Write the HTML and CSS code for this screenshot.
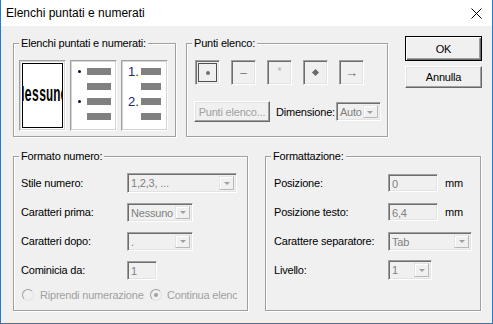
FILE: index.html
```html
<!DOCTYPE html>
<html>
<head>
<meta charset="utf-8">
<title>Elenchi puntati e numerati</title>
<link rel="stylesheet" href="styles.css">
</head>
<body>
<div class="window">
  <div class="titlebar">
    <span class="title">Elenchi puntati e numerati</span>
    <svg class="close" width="11" height="11" viewBox="0 0 11 11"><path d="M0.5 0.5L10.5 10.5M10.5 0.5L0.5 10.5" stroke="#000" stroke-width="1" fill="none"/></svg>
  </div>
  <div class="body">
    <div class="row row-top">
      <fieldset class="group g1">
        <legend>Elenchi puntati e numerati:</legend>
        <div class="previews">
          <div class="pv"><div class="none"><span>Nessuno</span></div></div>
          <div class="pv pv-bullets">
            <span class="dot"></span><span class="bar"></span>
            <span></span><span class="bar"></span>
            <span class="dot"></span><span class="bar"></span>
            <span></span><span class="bar"></span>
          </div>
          <div class="pv pv-numbers">
            <span class="num">1.</span><span class="bar"></span>
            <span></span><span class="bar"></span>
            <span class="num">2.</span><span class="bar"></span>
            <span></span><span class="bar"></span>
          </div>
        </div>
      </fieldset>
      <fieldset class="group g2">
        <legend>Punti elenco:</legend>
        <div class="bulletbtns">
          <div class="bb sel"><span class="g-dot"></span></div>
          <div class="bb"><span class="g-dash">–</span></div>
          <div class="bb"><span class="g-star">*</span></div>
          <div class="bb"><span class="g-diam"></span></div>
          <div class="bb"><span class="g-arrow">→</span></div>
        </div>
        <div class="g2row">
          <div class="btn btn-dis">Punti elenco...</div>
          <span class="lbl-dim">Dimensione:</span>
          <div class="combo w-auto"><span class="val">Auto</span><span class="dd"><i></i></span></div>
        </div>
      </fieldset>
      <div class="actions">
        <div class="btn btn-default">OK</div>
        <div class="btn btn-cancel">Annulla</div>
      </div>
    </div>
    <div class="row row-bottom">
      <fieldset class="group g3">
        <legend>Formato numero:</legend>
        <div class="form f3">
          <span class="lbl">Stile numero:</span>
          <div class="combo w-stile"><span class="val">1,2,3, ...</span><span class="dd"><i></i></span></div>
          <span class="lbl">Caratteri prima:</span>
          <div class="combo w-car"><span class="val">Nessuno</span><span class="dd"><i></i></span></div>
          <span class="lbl">Caratteri dopo:</span>
          <div class="combo w-car"><span class="val">.</span><span class="dd"><i></i></span></div>
          <span class="lbl">Cominicia da:</span>
          <div class="input w-start">1</div>
        </div>
        <div class="radios">
          <label class="radio-item r1"><span class="radio"></span><span class="rtext">Riprendi numerazione</span></label>
          <label class="radio-item r2"><span class="radio checked"></span><span class="rtext">Continua elenco</span></label>
        </div>
      </fieldset>
      <fieldset class="group g4">
        <legend>Formattazione:</legend>
        <div class="form f4">
          <span class="lbl">Posizione:</span>
          <div class="input w-pos">0</div>
          <span class="unit">mm</span>
          <span class="lbl">Posizione testo:</span>
          <div class="input w-pos">6,4</div>
          <span class="unit">mm</span>
          <span class="lbl">Carattere separatore:</span>
          <div class="combo w-sep span2"><span class="val">Tab</span><span class="dd"><i></i></span></div>
          <span class="lbl">Livello:</span>
          <div class="combo w-liv span2"><span class="val">1</span><span class="dd"><i></i></span></div>
        </div>
      </fieldset>
    </div>
  </div>
</div>
</body>
</html>
```

FILE: styles.css
```css
html, body {
  margin: 0;
  padding: 0;
  background: #f0f0f0;
}
body {
  font-family: "Liberation Sans", Arial, sans-serif;
  font-size: 11px;
  letter-spacing: -0.2px;
  color: #000;
}
.window {
  width: 493px;
  height: 324px;
  box-sizing: border-box;
  border: 1px solid #1a7fd4;
  border-top: 0;
  background: #f0f0f0;
  display: flex;
  flex-direction: column;
  overflow: hidden;
}
.titlebar {
  height: 26px;
  flex: none;
  background: #fff;
  display: flex;
  align-items: flex-start;
  justify-content: space-between;
  padding: 0 10px 0 5px;
}
.title {
  font-size: 12px;
  letter-spacing: 0;
  line-height: 16px;
  margin-top: 5px;
}
.close {
  margin-top: 8px;
}
.body {
  padding: 11px 0 0 12px;
  display: flex;
  flex-direction: column;
  gap: 13px;
}
.row {
  display: flex;
  align-items: flex-start;
}
.group {
  margin: 0;
  padding: 10px 0 0 0;
  min-width: 0;
  box-sizing: border-box;
  border: 1px solid #a0a0a0;
  box-shadow: 1px 1px 0 #fff, inset 1px 1px 0 #fff;
}
.group > legend {
  margin-left: 5px;
  padding: 0 2px;
  line-height: 13px;
  background: #f0f0f0;
}
.group.g1 { width: 163px; height: 100px; }
.group.g2 { width: 202px; height: 100px; margin-left: 10px; }
.actions {
  margin-left: 17px;
  margin-top: -1px;
  width: 77px;
  display: flex;
  flex-direction: column;
  gap: 5px;
}
.group.g3 { width: 235px; height: 161px; }
.group.g4 { width: 216px; height: 161px; margin-left: 17px; }

/* previews */
.previews {
  display: flex;
  gap: 4px;
  margin-left: 5px;
}
.pv {
  width: 47px;
  height: 71px;
  flex: none;
  box-sizing: border-box;
  border: 1px solid;
  border-color: #a0a0a0 #fff #fff #a0a0a0;
  box-shadow: inset 1px 1px 0 #d4d4d4, inset -1px -1px 0 #d4d4d4;
  background: #fff;
}
.pv:first-child {
  padding: 2px;
}
.none {
  height: 100%;
  box-sizing: border-box;
  border: 1px solid #000;
  background: #fff;
  display: flex;
  align-items: center;
  justify-content: center;
  overflow: hidden;
}
.none span {
  flex: none;
  font-family: "Liberation Mono", monospace;
  font-weight: bold;
  font-size: 12px;
  letter-spacing: 0;
  line-height: 12px;
  transform: scaleY(1.8);
  margin-top: 1px;
}
.pv-bullets, .pv-numbers {
  display: grid;
  grid-auto-rows: 7px;
  row-gap: 8px;
  padding-top: 7px;
  align-items: center;
  align-content: start;
}
.pv-bullets {
  grid-template-columns: 9px 24px;
  padding-left: 7px;
}
.pv-numbers {
  grid-template-columns: 13px 20px;
  padding-left: 6px;
}
.bar {
  height: 7px;
  background: #808080;
}
.dot {
  width: 3px;
  height: 3px;
  border-radius: 50%;
  background: #0a0a30;
}
.num {
  font-size: 13px;
  line-height: 7px;
  color: #24208a;
  letter-spacing: 0;
}

/* bullet buttons */
.bulletbtns {
  display: flex;
  gap: 11px;
  margin-left: 8px;
}
.bb {
  width: 25px;
  height: 25px;
  flex: none;
  box-sizing: border-box;
  border: 1px solid;
  border-color: #a0a0a0 #fff #fff #a0a0a0;
  box-shadow: inset 1px 1px 0 #6d6d6d, inset -1px -1px 0 #e3e3e3;
  display: flex;
  align-items: center;
  justify-content: center;
  color: #8a8a8a;
  letter-spacing: 0;
}
.bb.sel {
  box-shadow: inset 1px 1px 0 #6d6d6d, inset -1px -1px 0 #e3e3e3, inset 0 0 0 2px #f0f0f0, inset 0 0 0 3px #505050;
}
.g-dot {
  width: 4px;
  height: 4px;
  border-radius: 50%;
  background: #707070;
}
.g-dash { font-size: 12px; color: #7a7a7a; }
.g-star { font-size: 10px; color: #b0b0b0; margin-top: -2px; }
.g-diam {
  width: 5px;
  height: 5px;
  background: #6a6a6a;
  transform: rotate(45deg);
}
.g-arrow { font-size: 13px; color: #6a6a6a; }

.g2row {
  display: flex;
  align-items: center;
  margin-top: 16px;
  margin-left: 7px;
}
.lbl-dim {
  margin-left: 6px;
  margin-right: 1px;
}

/* buttons */
.btn {
  box-sizing: border-box;
  display: flex;
  align-items: center;
  justify-content: center;
  background: #f0f0f0;
  border: 1px solid;
  border-color: #fff #696969 #696969 #fff;
  box-shadow: inset -1px -1px 0 #a0a0a0, inset 1px 1px 0 #e3e3e3;
}
.btn-default {
  height: 25px;
  border-color: #000;
  box-shadow: inset 1px 1px 0 #fff, inset -1px -1px 0 #696969, inset -2px -2px 0 #a0a0a0;
}
.btn-cancel {
  height: 22px;
}
.btn-dis {
  width: 76px;
  height: 21px;
  flex: none;
  color: #a0a0a0;
}

/* form controls */
.form {
  display: grid;
  grid-auto-rows: 20px;
  row-gap: 9px;
  align-items: center;
}
.f3 {
  grid-template-columns: 106px auto;
  justify-items: start;
  margin-left: 7px;
}
.f4 {
  grid-template-columns: 114px 57px auto;
  justify-items: start;
  margin-left: 8px;
}
.span2 { grid-column: span 2; }
.unit { font-size: 11px; }

.input, .combo {
  box-sizing: border-box;
  border: 1px solid;
  border-color: #a0a0a0 #fff #fff #a0a0a0;
  box-shadow: inset 1px 1px 0 #6d6d6d, inset -1px -1px 0 #e3e3e3;
  background: #f0f0f0;
  color: #808080;
}
.input {
  height: 19px;
  padding: 1px 0 0 3px;
  line-height: 16px;
}
.combo {
  height: 20px;
  display: flex;
  align-items: stretch;
  padding: 2px;
}
.combo .val {
  flex: 1;
  padding-left: 1px;
  line-height: 14px;
  white-space: nowrap;
  overflow: hidden;
}
.combo .dd {
  width: 15px;
  flex: none;
  box-sizing: border-box;
  border: 1px solid;
  border-color: #e3e3e3 #b8b8b8 #b8b8b8 #e3e3e3;
  box-shadow: inset 1px 1px 0 #fff;
  display: flex;
  align-items: center;
  justify-content: center;
}
.combo .dd i {
  width: 0;
  height: 0;
  border-left: 3px solid transparent;
  border-right: 3px solid transparent;
  border-top: 3px solid #a0a0a0;
  margin-top: 1px;
}
.w-auto { width: 45px; height: 19px; flex: none; }
.w-stile { width: 110px; }
.w-car { width: 66px; height: 19px; }
.w-start { width: 30px; }
.w-pos { width: 50px; height: 18px; }
.w-sep { width: 84px; height: 19px; }
.w-liv { width: 44px; }

.radios {
  display: flex;
  margin-top: 8px;
  margin-left: 8px;
  height: 14px;
  align-items: center;
}
.radio-item {
  display: flex;
  align-items: center;
  color: #a0a0a0;
  white-space: nowrap;
}
.r1 { width: 128px; }
.r2 { width: 87px; overflow: hidden; }
.radio {
  width: 12px;
  height: 12px;
  box-sizing: border-box;
  border-radius: 50%;
  border: 1px solid;
  border-color: #a0a0a0 #e3e3e3 #e3e3e3 #a0a0a0;
  background: #f0f0f0;
  margin-right: 6px;
  display: flex;
  align-items: center;
  justify-content: center;
  flex: none;
}
.radio.checked::after {
  content: "";
  width: 4px;
  height: 4px;
  border-radius: 50%;
  background: #a0a0a0;
}
.r2 .radio { margin-right: 5px; }
```
